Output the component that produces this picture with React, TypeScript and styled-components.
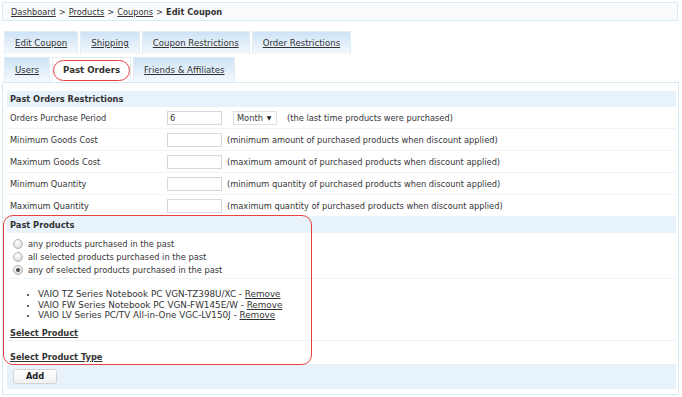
import React from 'react';
import styled, { createGlobalStyle } from 'styled-components';

const GlobalStyle = createGlobalStyle`
  html, body {
    margin: 0;
    padding: 0;
    background: #ffffff;
  }
  body {
    font-family: "DejaVu Sans", Verdana, sans-serif;
    font-size: 8.25px;
    color: #363636;
  }
`;

const Page = styled.div`
  width: 677px;
  padding: 2px 0 0 2px;
`;

const Breadcrumb = styled.div`
  height: 17px;
  display: flex;
  align-items: center;
  padding-left: 8px;
  margin-right: 1px;
  background: #f9fbfc;
  border: 1px solid #d9ebf4;
  color: #333;

  a {
    color: #333;
    text-decoration: underline;
  }
  b {
    font-weight: bold;
  }
  span {
    margin: 0 3px;
  }
`;

const TabRow = styled.div<{ $top: number }>`
  display: flex;
  gap: 2px;
  padding-left: 2px;
  margin-top: ${(p) => p.$top}px;
`;

const Tab = styled.div<{ $active?: boolean; $height: number }>`
  position: relative;
  height: ${(p) => p.$height}px;
  padding: 0 10px;
  display: flex;
  align-items: center;
  font-size: 8.6px;
  box-sizing: border-box;
  border: 1px solid #e1edf5;
  border-bottom: none;
  background: ${(p) => (p.$active ? '#ffffff' : 'linear-gradient(#cee3f6, #f6fafd)')};
  color: #333;
  text-decoration: ${(p) => (p.$active ? 'none' : 'underline')};
  font-weight: ${(p) => (p.$active ? 'bold' : 'normal')};
  margin-bottom: ${(p) => (p.$active ? '-1px' : '0')};
  z-index: ${(p) => (p.$active ? 1 : 0)};

  ${(p) =>
    p.$active &&
    `
    &::after {
      content: '';
      position: absolute;
      left: 0px;
      right: 0px;
      top: 2px;
      bottom: 1px;
      border: 1.3px solid #e8403f;
      border-radius: 12px;
    }
  `}
`;

const Panel = styled.div`
  border: 1px solid #d7e9f3;
  background: #ffffff;
  padding: 8px 2px 5px 4px;
  height: 313px;
  box-sizing: border-box;
`;

const SectionHeader = styled.div`
  height: 16px;
  display: flex;
  align-items: center;
  padding-left: 3px;
  background: #e8f2fb;
  font-weight: bold;
  color: #333;
`;

const FormRow = styled.div`
  height: 22px;
  display: grid;
  grid-template-columns: 157px auto;
  align-items: center;
  border-bottom: 1px solid #edf4fa;
  box-sizing: border-box;
  padding-left: 3px;
  &:last-of-type {
    border-bottom: none;
  }
`;

const Controls = styled.div`
  display: flex;
  align-items: center;
`;

const TextInput = styled.div`
  width: 55px;
  height: 14px;
  box-sizing: border-box;
  border: 1px solid #d3d9df;
  padding-left: 2px;
  display: flex;
  align-items: center;
  margin-right: 5px;
  background: #fff;
`;

const SelectBox = styled.div`
  width: 44px;
  height: 14px;
  box-sizing: border-box;
  border: 1px solid #dde2e7;
  margin-left: 6px;
  margin-right: 10px;
  display: flex;
  align-items: center;
  padding-left: 3px;
  gap: 4px;

  i {
    font-style: normal;
    font-size: 6px;
    color: #222;
  }
`;

const Annotated = styled.div`
  position: relative;

  &::after {
    content: '';
    position: absolute;
    left: -4px;
    top: -2px;
    width: 307px;
    bottom: -1px;
    border: 1.3px solid #e8403f;
    border-radius: 10px;
    pointer-events: none;
  }
`;

const RadioGroup = styled.div`
  padding: 4px 0 2px 6px;
  border-bottom: 1px solid #edf4fa;
`;

const RadioLine = styled.div`
  height: 13px;
  display: flex;
  align-items: center;
  gap: 5px;
`;

const Radio = styled.span<{ $checked?: boolean }>`
  width: 10px;
  height: 10px;
  box-sizing: border-box;
  border-radius: 50%;
  border: 1px solid #b4b4b4;
  background: radial-gradient(circle at 40% 30%, #ffffff, #cfcfcf);
  display: flex;
  align-items: center;
  justify-content: center;

  &::after {
    content: '';
    width: 4px;
    height: 4px;
    border-radius: 50%;
    background: #4a4a4a;
    display: ${(p) => (p.$checked ? 'block' : 'none')};
  }
`;

const ProductBlock = styled.div`
  padding: 10px 0 1px 3px;
  border-bottom: 1px solid #edf4fa;
`;

const ProductList = styled.ul`
  margin: 0 0 6px 0;
  padding-left: 28px;
  font-size: 8.8px;
  line-height: 10.5px;
  color: #333;

  li::marker {
    font-size: 7px;
  }

  a {
    color: #333;
    text-decoration: underline;
  }
`;

const BoldLink = styled.a`
  display: block;
  font-weight: bold;
  color: #333;
  text-decoration: underline;
  line-height: 12px;
`;

const TypeBlock = styled.div`
  padding: 10px 0 1px 3px;
`;

const Footer = styled.div`
  height: 25px;
  background: #e8f2fb;
  display: flex;
  align-items: center;
  padding-left: 6px;
`;

const AddButton = styled.button`
  width: 44px;
  height: 15px;
  padding: 0;
  font-family: inherit;
  font-size: 8.25px;
  font-weight: bold;
  color: #222;
  background: linear-gradient(#ffffff, #f1f1f1);
  border: 1px solid #d4d4d4;
  border-radius: 3px;
`;

const restrictions = [
  { label: 'Minimum Goods Cost', note: '(minimum amount of purchased products when discount applied)' },
  { label: 'Maximum Goods Cost', note: '(maximum amount of purchased products when discount applied)' },
  { label: 'Minimum Quantity', note: '(minimum quantity of purchased products when discount applied)' },
  { label: 'Maximum Quantity', note: '(maximum quantity of purchased products when discount applied)' },
];

const products = [
  'VAIO TZ Series Notebook PC VGN-TZ398U/XC',
  'VAIO FW Series Notebook PC VGN-FW145E/W',
  'VAIO LV Series PC/TV All-in-One VGC-LV150J',
];

const radios = [
  'any products purchased in the past',
  'all selected products purchased in the past',
  'any of selected products purchased in the past',
];

export default function App() {
  return (
    <Page>
      <GlobalStyle />
      <Breadcrumb>
        <a>Dashboard</a>
        <span>&gt;</span>
        <a>Products</a>
        <span>&gt;</span>
        <a>Coupons</a>
        <span>&gt;</span>
        <b>Edit Coupon</b>
      </Breadcrumb>

      <TabRow $top={10}>
        <Tab $height={23}>Edit Coupon</Tab>
        <Tab $height={23}>Shipping</Tab>
        <Tab $height={23}>Coupon Restrictions</Tab>
        <Tab $height={23}>Order Restrictions</Tab>
      </TabRow>
      <TabRow $top={3}>
        <Tab $height={25}>Users</Tab>
        <Tab $height={25} $active>Past Orders</Tab>
        <Tab $height={25}>Friends &amp; Affiliates</Tab>
      </TabRow>

      <Panel>
        <SectionHeader>Past Orders Restrictions</SectionHeader>
        <FormRow>
          <span>Orders Purchase Period</span>
          <Controls>
            <TextInput>6</TextInput>
            <SelectBox>
              Month <i>▼</i>
            </SelectBox>
            <span>(the last time products were purchased)</span>
          </Controls>
        </FormRow>
        {restrictions.map((r) => (
          <FormRow key={r.label}>
            <span>{r.label}</span>
            <Controls>
              <TextInput />
              <span>{r.note}</span>
            </Controls>
          </FormRow>
        ))}

        <Annotated>
          <SectionHeader>Past Products</SectionHeader>
          <RadioGroup>
            {radios.map((r, i) => (
              <RadioLine key={r}>
                <Radio $checked={i === 2} />
                <span>{r}</span>
              </RadioLine>
            ))}
          </RadioGroup>
          <ProductBlock>
            <ProductList>
              {products.map((p) => (
                <li key={p}>
                  {p} - <a>Remove</a>
                </li>
              ))}
            </ProductList>
            <BoldLink>Select Product</BoldLink>
          </ProductBlock>
          <TypeBlock>
            <BoldLink>Select Product Type</BoldLink>
          </TypeBlock>
        </Annotated>

        <Footer>
          <AddButton>Add</AddButton>
        </Footer>
      </Panel>
    </Page>
  );
}
